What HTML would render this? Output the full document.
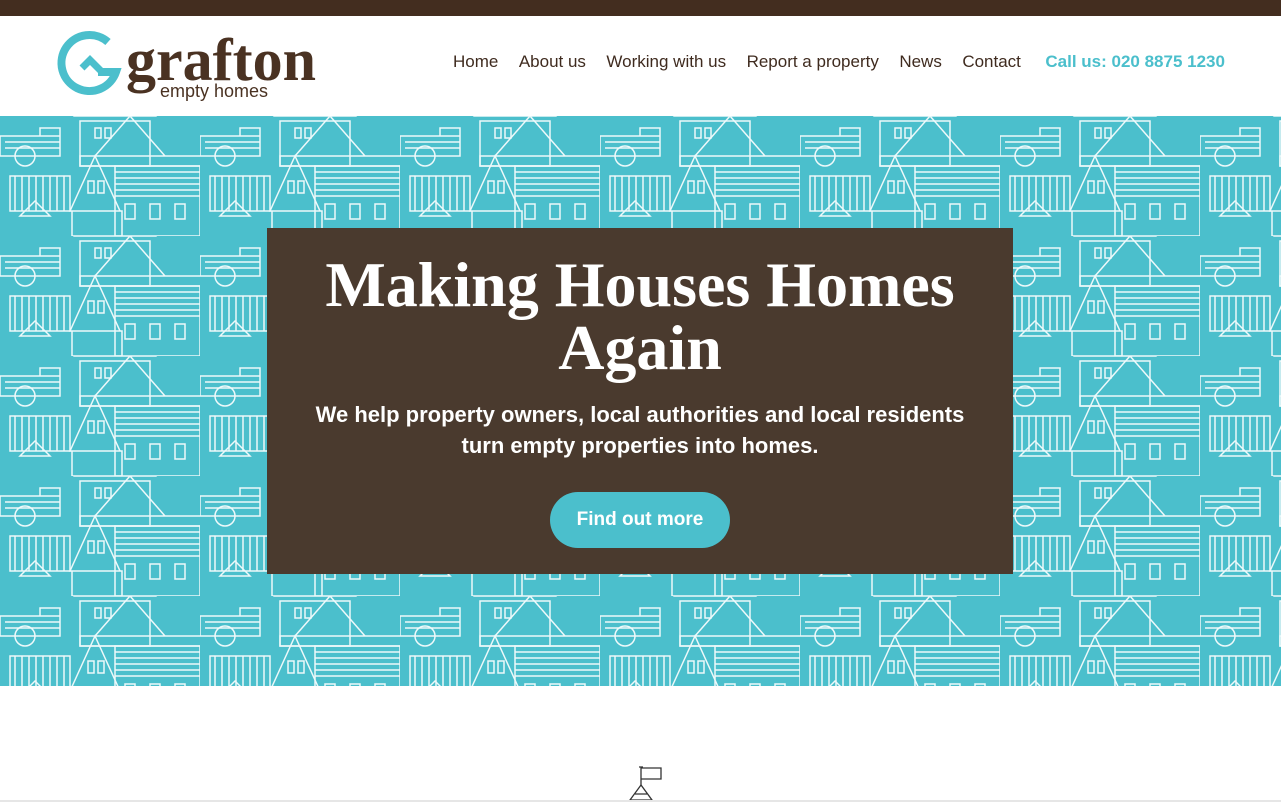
<!DOCTYPE html>
<html><head><meta charset="utf-8"><style>
*{margin:0;padding:0;box-sizing:border-box}
body{width:1281px;height:802px;overflow:hidden;background:#fff;font-family:"Liberation Sans",sans-serif;position:relative}
.top{position:absolute;left:0;top:0;width:1281px;height:16px;background:#432d1f}
.logo{position:absolute;left:52px;top:28px}
.nav{position:absolute;top:52px;left:453px;width:772px;font-size:17px;color:#3f2b1f;white-space:nowrap;display:flex;justify-content:space-between}
.nav .call{color:#4bbfcc;font-weight:bold;margin-left:4px}
.hero{position:absolute;left:0;top:116px;width:1281px;height:570px;background:#4bbfcc;overflow:hidden}
.box{position:absolute;left:267px;top:228px;width:746px;height:346px;background:#4a3a2e;text-align:center;color:#fff}
.box h1{font-family:"Liberation Serif",serif;font-weight:bold;font-size:64px;line-height:63px;margin-top:25px}
.box p{font-size:22px;font-weight:bold;line-height:31px;margin-top:20px}
.btn{display:inline-block;margin-top:31px;background:#4bbfcc;border-radius:28px;width:180px;height:56px;line-height:56px;font-size:19px;font-weight:bold}
</style></head><body>
<div class="top"></div>
<div class="logo">
<svg width="290" height="78" viewBox="0 0 290 78">
<path d="M56 14 A28 28 0 1 0 64 44 L46 44" fill="none" stroke="#4bbfcc" stroke-width="8"/>
<path d="M30 40 L38 32 L50 44" fill="none" stroke="#4bbfcc" stroke-width="7"/>
<text x="74" y="52" font-family="Liberation Serif,serif" font-weight="bold" font-size="60" fill="#4a3222">grafton</text>
<text x="108" y="69" font-family="Liberation Sans,sans-serif" font-size="18" fill="#4a3222">empty homes</text>
</svg></div>
<div class="nav"><span>Home</span><span>About us</span><span>Working with us</span><span>Report a property</span><span>News</span><span>Contact</span><span class="call">Call us: 020 8875 1230</span></div>
<div class="hero">
<svg width="1281" height="570"><defs><pattern id="p" width="200" height="120" patternUnits="userSpaceOnUse">
<g fill="none" stroke="#fff" stroke-width="1.5" opacity="0.9">
<path d="M75 0 L115 -30 L155 0 Z M80 5 h70 v45 h-70z M95 12 h6 v10 h-6z M105 12 h6 v10 h-6z"/>
<path d="M95 40 L130 0 L165 40 Z M80 40 h150 v10 h-150z"/>
<path d="M70 95 L95 40 L120 95 Z M72 95 h50 v25 h-50z M88 65 h6 v12 h-6z M98 65 h6 v12 h-6z"/>
<path d="M115 50 h85 v30 h-85z M115 56 h85 M115 62 h85 M115 68 h85 M115 74 h85 M125 88 h10 v15 h-10z M150 88 h10 v15 h-10z M175 88 h10 v15 h-10z M115 80 h85 v40 h-85z"/>
<path d="M10 60 h60 v35 h-60z M15 60 v35 M22 60 v35 M29 60 v35 M36 60 v35 M43 60 v35 M50 60 v35 M57 60 v35 M64 60 v35"/>
<path d="M0 20 h60 v20 h-60z M40 12 h20 v8 h-20z M5 26 h55 M5 32 h55 M20 100 L35 85 L50 100 Z"/>
<circle cx="25" cy="40" r="10"/>
</g></pattern></defs><rect width="1281" height="570" fill="url(#p)"/></svg>
</div>
<div class="box">
<h1>Making Houses Homes<br>Again</h1>
<p>We help property owners, local authorities and local residents<br>turn empty properties into homes.</p>
<div class="btn">Find out more</div>
</div>
<svg style="position:absolute;left:626px;top:764px" width="38" height="38" viewBox="0 0 38 38">
<g fill="none" stroke="#333" stroke-width="1.3"><path d="M15 3 v18 M13 3 h4 M15 4 h20 v11 h-20"/><path d="M15 21 L4 36 h22 Z M9 30 h12"/></g></svg>
<div style="position:absolute;left:0;top:800px;width:1281px;height:2px;background:#e6e6e6"></div>
</body></html>
